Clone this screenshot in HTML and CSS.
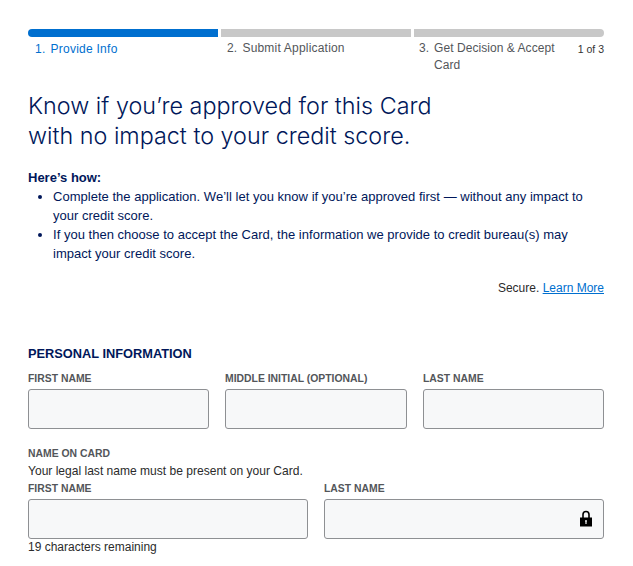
FILE: index.html
```html
<!DOCTYPE html>
<html lang="en">
<head>
<meta charset="utf-8">
<title>Application</title>
<link rel="stylesheet" href="styles.css">
</head>
<body>
<main class="page">
  <div class="progress">
    <div class="bars">
      <span class="bar bar-active"></span>
      <span class="bar"></span>
      <span class="bar"></span>
    </div>
    <ol class="steps">
      <li class="step step-active"><span class="num">1.</span><span>Provide Info</span></li>
      <li class="step"><span class="num">2.</span><span>Submit Application</span></li>
      <li class="step step-last"><span class="num">3.</span><span class="step-text">Get Decision &amp; Accept Card</span><span class="count">1 of 3</span></li>
    </ol>
  </div>
  <h1 class="title">Know if you’re approved for this Card<br>with no impact to your credit score.</h1>
  <p class="how">Here’s how:</p>
  <ul class="list">
    <li>Complete the application. We’ll let you know if you’re approved first — without any impact to your credit score.</li>
    <li>If you then choose to accept the Card, the information we provide to credit bureau(s) may impact your credit score.</li>
  </ul>
  <p class="secure">Secure. <a href="#">Learn More</a></p>
  <h2 class="section">PERSONAL INFORMATION</h2>
  <div class="row row-3">
    <div class="field"><label class="label">FIRST NAME</label><div class="input"></div></div>
    <div class="field"><label class="label">MIDDLE INITIAL (OPTIONAL)</label><div class="input"></div></div>
    <div class="field"><label class="label">LAST NAME</label><div class="input"></div></div>
  </div>
  <div class="label card-label">NAME ON CARD</div>
  <p class="hint">Your legal last name must be present on your Card.</p>
  <div class="row row-2">
    <div class="field"><label class="label">FIRST NAME</label><div class="input"></div><p class="remaining">19 characters remaining</p></div>
    <div class="field"><label class="label">LAST NAME</label><div class="input input-lock">
      <svg class="lock" width="14" height="17" viewBox="0 0 14 17"><path fill="none" stroke="#000" stroke-width="1.600" d="M4 8V4.500a3 3 0 0 1 6 0V8"/><path fill="#000" fill-rule="evenodd" d="M1 7.500h12v9H1zM7 10a1 1 0 0 0-.6 1.800V14h1.200v-2.200A1 1 0 0 0 7 10z"/></svg>
    </div></div>
  </div>
</main>
</body>
</html>
```
FILE: styles.css
```css
* { box-sizing: border-box; }
html, body { margin: 0; padding: 0; background: #fff; }
body { font-family: "Liberation Sans", Arial, sans-serif; color: #00175a; overflow: hidden; }
.page { padding: 29px 29px 0 28px; }
.bars { display: flex; gap: 3px; }
.bar { flex: 1; height: 8px; background: #c8c8c8; }
.bar:first-child { border-radius: 4px 0 0 4px; }
.bar:last-child { border-radius: 0 4px 4px 0; }
.bar-active { background: #006fcf; }
.steps { display: flex; gap: 3px; list-style: none; margin: 0; padding: 0; }
.step { flex: 1 1 0; min-width: 0; display: flex; gap: 5px; padding: 3px 0 0 4px; font-size: 12px; line-height: 17px; letter-spacing: 0.2px; color: #53565a; }
.step-active { color: #006fcf; padding-top: 4px; padding-left: 7px; letter-spacing: 0.25px; }
.step-last { letter-spacing: 0.05px; }
.step-text { flex: 1 1 0; min-width: 0; }
.count { flex: none; font-size: 10.500px; white-space: nowrap; letter-spacing: 0; margin-top: 1px; color: #333; }
.title { margin: 17px 0 0; font-family: Inter, "Liberation Sans", sans-serif; font-weight: 300; font-size: 23.350px; line-height: 30px; color: #00175a; }
.how { margin: 17px 0 0; font-size: 13px; line-height: 19px; font-weight: 700; }
.list { margin: 0; padding: 0 20px 0 25px; font-size: 13px; line-height: 19px; letter-spacing: 0.02px; }
.secure { margin: 17px 0 0; text-align: right; font-size: 12px; line-height: 16px; color: #2b2b2b; }
.secure a { color: #006fcf; }
.section { margin: 50px 0 0; font-size: 12.800px; line-height: 16px; font-weight: 700; color: #00175a; }
.row { display: grid; }
.row-3 { grid-template-columns: 181px 182px 181px; column-gap: 16px; margin-top: 10px; }
.row-2 { grid-template-columns: 280px 280px; column-gap: 16px; margin-top: 3px; }
.label { display: block; font-size: 10.400px; line-height: 13px; font-weight: 700; color: #53565a; }
.input { height: 40px; margin-top: 4px; background: #f7f8f9; border: 1px solid #8e9093; border-radius: 3px; display: flex; align-items: center; justify-content: flex-end; padding-right: 10px; }
.card-label { margin-top: 18px; }
.hint { margin: 3px 0 0; font-size: 12.050px; line-height: 16px; color: #2b2b2b; }
.remaining { margin: 0; font-size: 12px; line-height: 16px; color: #2b2b2b; }
.lock { display: block; margin-bottom: 2px; }
```
